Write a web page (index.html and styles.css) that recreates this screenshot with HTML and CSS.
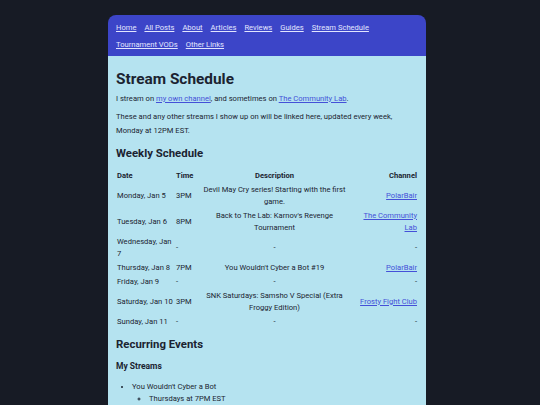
FILE: index.html
```html
<!DOCTYPE html>
<html>
<head>
  <title>Stream Schedule</title>
  <link rel="stylesheet" href="styles.css">
</head>
<body>

  <div class="page">
    <!-- Nav -->
    <nav class="nav">
      <a href="#">Home</a>
      <a href="#">All Posts</a>
      <a href="#">About</a>
      <a href="#">Articles</a>
      <a href="#">Reviews</a>
      <a href="#">Guides</a>
      <a href="#">Stream Schedule</a>
      <a href="#">Tournament VODs</a>
      <a href="#">Other Links</a>
    </nav>

    <!-- Content -->
    <main class="content">
      <h1>Stream Schedule</h1>
      <p>I stream on <a href="#">my own channel</a>, and sometimes on <a href="#">The Community Lab</a>.</p>
      <p>These and any other streams I show up on will be linked here, updated every week, Monday at 12PM EST.</p>

      <h2>Weekly Schedule</h2>
      <table class="schedule">
        <thead>
          <tr>
            <th class="c-date">Date</th>
            <th class="c-time">Time</th>
            <th class="c-desc">Description</th>
            <th class="c-chan">Channel</th>
          </tr>
        </thead>
        <tbody>
          <tr>
            <td class="c-date">Monday, Jan 5</td>
            <td class="c-time">3PM</td>
            <td class="c-desc">Devil May Cry series! Starting with the first game.</td>
            <td class="c-chan"><a href="#">PolarBair</a></td>
          </tr>
          <tr>
            <td class="c-date">Tuesday, Jan 6</td>
            <td class="c-time">8PM</td>
            <td class="c-desc">Back to The Lab: Karnov's Revenge Tournament</td>
            <td class="c-chan"><a href="#">The Community Lab</a></td>
          </tr>
          <tr>
            <td class="c-date">Wednesday, Jan 7</td>
            <td class="c-time">-</td>
            <td class="c-desc">-</td>
            <td class="c-chan">-</td>
          </tr>
          <tr>
            <td class="c-date">Thursday, Jan 8</td>
            <td class="c-time">7PM</td>
            <td class="c-desc">You Wouldn't Cyber a Bot #19</td>
            <td class="c-chan"><a href="#">PolarBair</a></td>
          </tr>
          <tr>
            <td class="c-date">Friday, Jan 9</td>
            <td class="c-time">-</td>
            <td class="c-desc">-</td>
            <td class="c-chan">-</td>
          </tr>
          <tr>
            <td class="c-date">Saturday, Jan 10</td>
            <td class="c-time">3PM</td>
            <td class="c-desc">SNK Saturdays: Samsho V Special (Extra Froggy Edition)</td>
            <td class="c-chan"><a href="#">Frosty Fight Club</a></td>
          </tr>
          <tr>
            <td class="c-date">Sunday, Jan 11</td>
            <td class="c-time">-</td>
            <td class="c-desc">-</td>
            <td class="c-chan">-</td>
          </tr>
        </tbody>
      </table>

      <h2>Recurring Events</h2>
      <h3>My Streams</h3>
      <ul>
        <li>You Wouldn't Cyber a Bot
          <ul>
            <li>Thursdays at 7PM EST</li>
          </ul>
        </li>
      </ul>
    </main>
  </div>

</body>
</html>
```

FILE: styles.css
```css
body {
  margin: 0;
  padding: 15px 6px 0 0;
  background-color: #171b25;
  font-family: Roboto, "Liberation Sans", sans-serif;
  font-size: 7.6px;
  color: #1b2331;
}

.page {
  width: 318px;
  margin: 0 auto;
  border-radius: 8px 8px 0 0;
  overflow: hidden;
}

/* Nav */
.nav {
  background-color: #3c45c8;
  padding: 3.5px 8px;
  display: flex;
  flex-wrap: wrap;
  column-gap: 8px;
  line-height: 17px;
}

.nav a {
  color: #e2e5ff;
}

/* Content */
.content {
  background-color: #b5e3f0;
  padding: 12px 8px 20px;
  line-height: 14px;
}

.content a {
  color: #4450d8;
}

h1 {
  font-size: 15.4px;
  line-height: 22px;
  margin: 0 0 2px;
}

h2 {
  font-size: 11.4px;
  line-height: 16px;
  margin: 7px 0 8px;
}

h3 {
  font-size: 8.5px;
  line-height: 12px;
  margin: 8px 0 9px;
}

p {
  margin: 0 0 4px;
}

/* Table */
.schedule {
  width: 100%;
  table-layout: fixed;
  border-collapse: collapse;
  line-height: 12px;
}

.schedule th {
  font-weight: bold;
  padding: 1px 1px;
}

.schedule td {
  padding: 1px 1px;
}

.c-date { text-align: left; width: 57px; }
.c-time { text-align: left; width: 20px; }
.c-desc { text-align: center; width: 153px; }
.c-chan { text-align: right; }

ul {
  margin: 0;
  padding-left: 16px;
  line-height: 12px;
}

ul ul {
  padding-left: 17px;
  list-style-type: circle;
}
```
